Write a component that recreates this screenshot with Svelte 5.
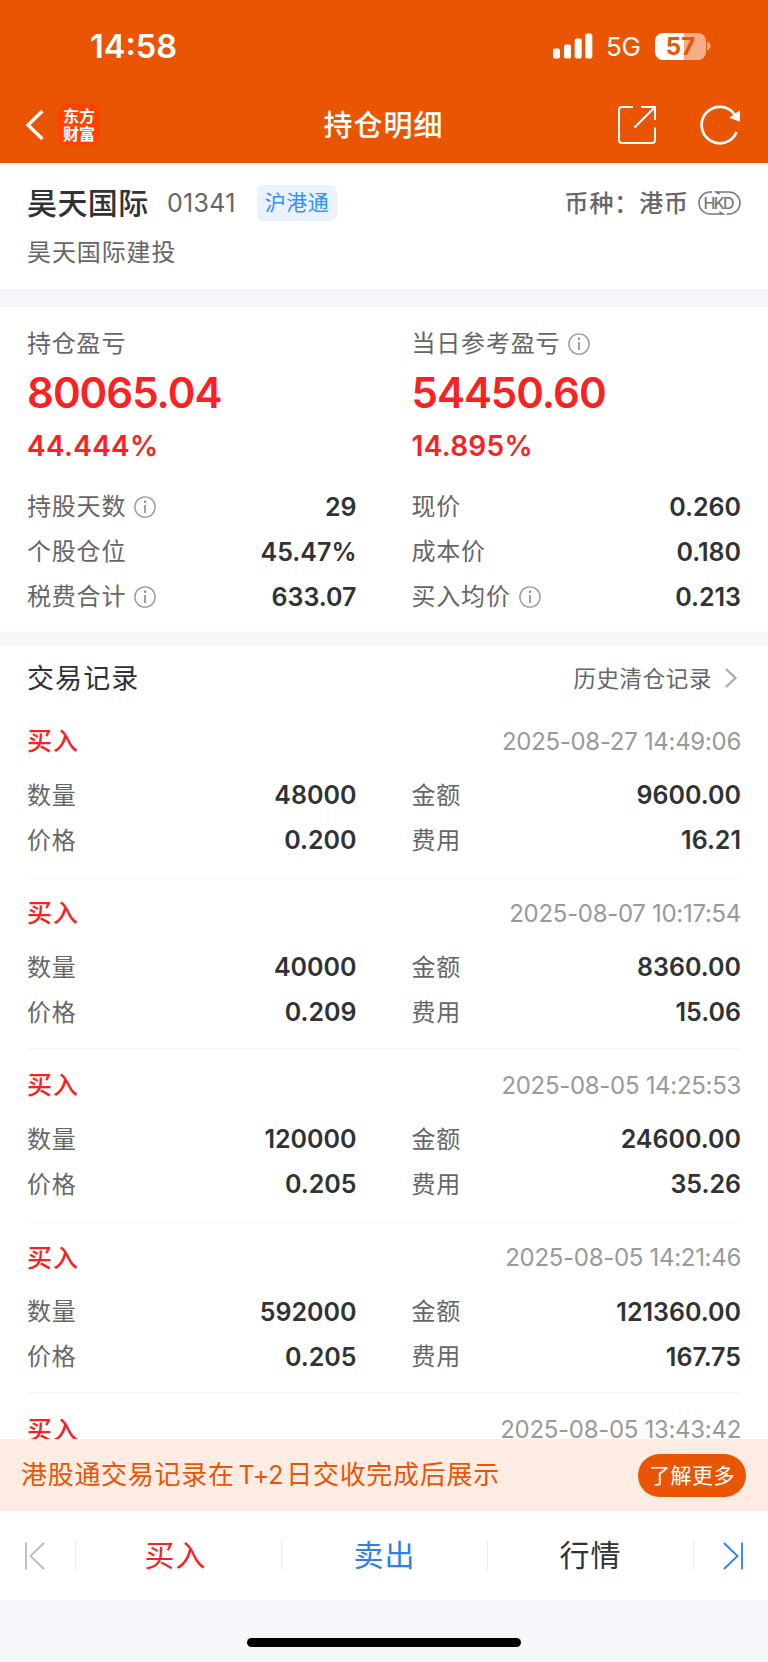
<script>
	let stats = [
		{ label: '持股天数', value: '29', info: true },
		{ label: '现价', value: '0.260' },
		{ label: '个股仓位', value: '45.47%' },
		{ label: '成本价', value: '0.180' },
		{ label: '税费合计', value: '633.07', info: true },
		{ label: '买入均价', value: '0.213', info: true }
	];

	let records = [
		{ time: '2025-08-27 14:49:06', count: '48000', amount: '9600.00', price: '0.200', fee: '16.21' },
		{ time: '2025-08-07 10:17:54', count: '40000', amount: '8360.00', price: '0.209', fee: '15.06' },
		{ time: '2025-08-05 14:25:53', count: '120000', amount: '24600.00', price: '0.205', fee: '35.26' },
		{ time: '2025-08-05 14:21:46', count: '592000', amount: '121360.00', price: '0.205', fee: '167.75' },
		{ time: '2025-08-05 13:43:42', count: '', amount: '', price: '', fee: '' }
	];
</script>

{#snippet infoIcon()}
	<svg class="info" width="22" height="22" viewBox="0 0 22 22">
		<circle cx="11" cy="11" r="10.1" fill="none" stroke="#999" stroke-width="1.4" />
		<path d="M11 9v8" stroke="#888" stroke-width="1.6" />
		<circle cx="11" cy="5.8" r="1.2" fill="#888" />
	</svg>
{/snippet}

{#snippet pair(label, value, info)}
	<div class="pair">
		<span class="label">{label}</span>
		{#if info}
			{@render infoIcon()}
		{/if}
		<span class="value">{value}</span>
	</div>
{/snippet}

<div class="page">
	<header>
		<div class="status">
			<span class="clock">14:58</span>
			<svg class="signal" width="40" height="26" viewBox="0 0 40 26" fill="#fff">
				<rect x="0" y="15.5" width="7" height="10" rx="1.8" />
				<rect x="11" y="11.5" width="7" height="14" rx="1.8" />
				<rect x="21.7" y="5.5" width="7" height="20" rx="1.8" />
				<rect x="32.3" y="0.5" width="7" height="25" rx="1.8" />
			</svg>
			<span class="network">5G</span>
			<div class="battery"><span>57</span></div>
			<svg width="5" height="10" viewBox="0 0 5 10">
				<path d="M1 0.5Q4.5 2 4.5 5T1 9.5Z" fill="#f5ae86" />
			</svg>
		</div>
		<nav>
			<div class="nav-left">
				<svg width="20" height="32" viewBox="0 0 20 32">
					<path d="M17.5 2L3 16L17.5 30" fill="none" stroke="#fff" stroke-width="3.4" />
				</svg>
				<div class="logo">东方<br />财富</div>
			</div>
			<h1>持仓明细</h1>
			<div class="nav-right">
				<svg width="40" height="40" viewBox="0 0 40 40" fill="none" stroke="#fff" stroke-width="2">
					<path d="M16 2H5Q2 2 2 5V35Q2 38 5 38H35Q38 38 38 35V22.5" />
					<path d="M24 2H38V15M38 2L17.5 22.5" />
				</svg>
				<svg width="42" height="42" viewBox="0 0 42 42">
					<path d="M36.6 28A18.2 18.2 0 1 1 35 11" fill="none" stroke="#fff" stroke-width="2.7" />
					<path d="M40 6.2V17.7L29.3 13.7Z" fill="#fff" />
				</svg>
			</div>
		</nav>
	</header>

	<section class="stock">
		<div class="stock-row">
			<h2>昊天国际</h2>
			<span class="code">01341</span>
			<span class="tag">沪港通</span>
			<span class="currency">币种：港币</span>
			<svg width="43" height="24" viewBox="0 0 43 24" fill="none" stroke="#777" stroke-width="1.5">
				<path d="M14 1H12A11 11 0 0 0 12 23H25L21.5 21" />
				<path d="M21.5 3L18 1H31A11 11 0 0 1 31 23H28.5" />
				<text x="5.6" y="17.5" textLength="31" class="hkd">HKD</text>
			</svg>
		</div>
		<p>昊天国际建投</p>
	</section>

	<section class="profit">
		<div class="grid">
			<div class="total">
				<div class="pair"><span class="label">持仓盈亏</span></div>
				<strong>80065.04</strong>
				<em>44.444%</em>
			</div>
			<div class="total">
				<div class="pair"><span class="label">当日参考盈亏</span>{@render infoIcon()}</div>
				<strong>54450.60</strong>
				<em>14.895%</em>
			</div>
		</div>
		<div class="grid">
			{#each stats as s}
				{@render pair(s.label, s.value, s.info)}
			{/each}
		</div>
	</section>

	<section class="records">
		<div class="records-head">
			<h3>交易记录</h3>
			<span>历史清仓记录</span>
			<svg width="14" height="22" viewBox="0 0 14 22">
				<path d="M2 2L11.5 11L2 20" fill="none" stroke="#aaa" stroke-width="2.2" />
			</svg>
		</div>
		{#each records as r}
			<article>
				<div class="record-title">
					<b>买入</b>
					<time>{r.time}</time>
				</div>
				{#if r.count}
					<div class="grid">
						{@render pair('数量', r.count)}
						{@render pair('金额', r.amount)}
						{@render pair('价格', r.price)}
						{@render pair('费用', r.fee)}
					</div>
				{/if}
			</article>
		{/each}
	</section>

	<div class="notice">
		<span>港股通交易记录在<i>T+2</i>日交收完成后展示</span>
		<button>了解更多</button>
	</div>

	<div class="actions">
		<div class="edge">
			<svg width="22" height="28" viewBox="0 0 22 28" fill="none" stroke="#bbb" stroke-width="1.8">
				<path d="M2 0.5V27.5M20 1L6.5 14L20 27" />
			</svg>
		</div>
		<div class="action buy">买入</div>
		<div class="action sell">卖出</div>
		<div class="action">行情</div>
		<div class="edge last">
			<svg width="22" height="28" viewBox="0 0 22 28" fill="none" stroke="#2f7fe6" stroke-width="1.8">
				<path d="M20 0.5V27.5M2 1L15.5 14L2 27" />
			</svg>
		</div>
	</div>
	<footer><div class="home"></div></footer>
</div>

<style>
	:global(body) {
		margin: 0;
	}

	.page {
		display: flex;
		flex-direction: column;
		width: 768px;
		height: 1662px;
		overflow: hidden;
		background: #fff;
		color: #303233;
		font-family: Inter, 'Noto Sans CJK SC', sans-serif;
		white-space: nowrap;
	}

	.page * {
		box-sizing: border-box;
	}

	h1,
	h2,
	h3,
	p {
		margin: 0;
	}

	svg {
		display: block;
		flex: none;
	}

	header {
		flex: none;
		height: 163px;
		background: #ea5504;
		color: #fff;
	}

	.status {
		display: flex;
		align-items: center;
		height: 92px;
		padding-left: 90px;
	}

	.clock {
		width: 463px;
		font-size: 32.5px;
		font-weight: 600;
	}

	.network {
		width: 49px;
		margin-left: 13px;
		font-size: 26px;
		letter-spacing: -0.2px;
	}

	.battery {
		width: 51px;
		height: 27px;
		border-radius: 8px;
		background: linear-gradient(90deg, #fff 57%, #f5ae86 57%);
		color: #ea5504;
		font-size: 24px;
		font-weight: 700;
		line-height: 27px;
		text-align: center;
	}

	nav {
		display: grid;
		grid-template-columns: 1fr auto 1fr;
		align-items: center;
		height: 66px;
		padding: 0 26px 0 25px;
	}

	.nav-left {
		display: flex;
		align-items: center;
		gap: 13px;
	}

	.logo {
		width: 42px;
		height: 42px;
		padding-top: 2px;
		border-radius: 9px;
		background: #ff4200;
		font-family: 'Noto Sans CJK SC', sans-serif;
		font-size: 16px;
		font-weight: 700;
		line-height: 18px;
		text-align: center;
	}

	h1 {
		padding-bottom: 4px;
		font-size: 29px;
		font-weight: 500;
		letter-spacing: 1px;
	}

	.nav-right {
		display: flex;
		align-items: center;
		justify-content: flex-end;
		gap: 43px;
	}

	.stock {
		flex: none;
		height: 126px;
		padding: 20px 27px 0;
	}

	.stock-row {
		display: flex;
		align-items: center;
		height: 40px;
	}

	h2 {
		width: 140px;
		padding-bottom: 4px;
		font-size: 30px;
		font-weight: 500;
		letter-spacing: 0.4px;
	}

	.code {
		width: 90px;
		color: #666;
		font-size: 25px;
		letter-spacing: 0.3px;
	}

	.tag {
		width: 80px;
		height: 36px;
		border-radius: 6px;
		background: #eaf2ff;
		color: #3390ff;
		font-size: 21px;
		letter-spacing: 0.5px;
		line-height: 35px;
		text-align: center;
	}

	.currency {
		margin-left: auto;
		margin-right: 9px;
		padding-bottom: 3px;
		color: #666;
		font-size: 24px;
		font-weight: 500;
		letter-spacing: 0.9px;
	}

	.hkd {
		fill: #777;
		stroke: none;
		font-size: 16px;
		font-weight: 500;
	}

	.stock p {
		margin-top: 12px;
		color: #666;
		font-size: 24px;
		letter-spacing: 0.9px;
		line-height: 36px;
	}

	.profit {
		flex: none;
		height: 357px;
		padding: 14px 27px 0;
		border-top: 18px solid #f6f7fa;
		border-bottom: 14px solid #f6f7fa;
	}

	.grid {
		display: grid;
		grid-template-columns: 1fr 1fr;
		column-gap: 55px;
	}

	.pair {
		display: flex;
		align-items: center;
		height: 45px;
	}

	.label {
		padding-bottom: 4px;
		color: #666;
		font-size: 24px;
		letter-spacing: 0.8px;
	}

	.info {
		margin-left: 8px;
	}

	.value {
		margin-left: auto;
		font-size: 25px;
		font-weight: 600;
	}

	.total {
		height: 163px;
	}

	strong,
	em {
		display: block;
		color: #f82222;
		font-style: normal;
		font-weight: 600;
	}

	strong {
		font-size: 42px;
		letter-spacing: -1px;
		line-height: 54px;
	}

	em {
		font-size: 28px;
		letter-spacing: 0.3px;
		line-height: 52px;
	}

	.records {
		flex: 1;
		min-height: 0;
		overflow: hidden;
	}

	.records-head {
		display: flex;
		align-items: center;
		height: 58.6px;
		padding: 6px 30px 0 27px;
	}

	h3 {
		padding-bottom: 3px;
		font-size: 27px;
		font-weight: 400;
		letter-spacing: 1.1px;
	}

	.records-head span {
		margin-left: auto;
		margin-right: 12px;
		padding-bottom: 3px;
		color: #666;
		font-size: 22.5px;
		letter-spacing: 0.6px;
	}

	article {
		height: 172.2px;
		margin: 0 27px;
		padding-top: 9px;
		border-bottom: 1px solid #f4f4f5;
	}

	.record-title {
		display: flex;
		align-items: center;
		justify-content: space-between;
		height: 55px;
		margin-bottom: 4px;
	}

	b {
		padding-bottom: 4px;
		color: #f82222;
		font-size: 25px;
		font-weight: 500;
		letter-spacing: 1px;
	}

	time {
		color: #999;
		font-size: 24px;
		letter-spacing: -0.3px;
	}

	.notice {
		display: flex;
		flex: none;
		align-items: center;
		justify-content: space-between;
		height: 72px;
		padding: 0 22px 0 21px;
		background: #fcece4;
		color: #ea5504;
		font-size: 26px;
		letter-spacing: 0.7px;
	}

	.notice span {
		padding-bottom: 5px;
	}

	i {
		margin: 0 3px 0 4px;
		font-size: 25px;
		font-style: normal;
		letter-spacing: -0.2px;
	}

	button {
		width: 108px;
		height: 43px;
		padding: 0 0 3px;
		border: 0;
		border-radius: 22px;
		background: #ea5504;
		color: #fff;
		font-family: inherit;
		font-size: 21px;
		letter-spacing: 0.4px;
	}

	.actions {
		display: flex;
		flex: none;
		align-items: center;
		height: 89px;
	}

	.edge {
		display: flex;
		align-items: center;
		justify-content: center;
		width: 75px;
		height: 31px;
		padding-right: 5px;
	}

	.last {
		padding: 0 0 0 4px;
		border-left: 1px solid #ededef;
	}

	.action {
		flex: 1;
		height: 31px;
		border-left: 1px solid #ededef;
		font-size: 30px;
		letter-spacing: 1px;
		line-height: 30px;
		text-align: center;
	}

	.buy {
		color: #f82222;
		text-indent: -6px;
	}

	.sell {
		color: #2f7fe6;
	}

	footer {
		display: flex;
		flex: none;
		justify-content: center;
		height: 62px;
		padding-top: 38px;
		background: #f6f7fa;
	}

	.home {
		width: 274px;
		height: 9px;
		border-radius: 5px;
		background: #000;
	}
</style>
